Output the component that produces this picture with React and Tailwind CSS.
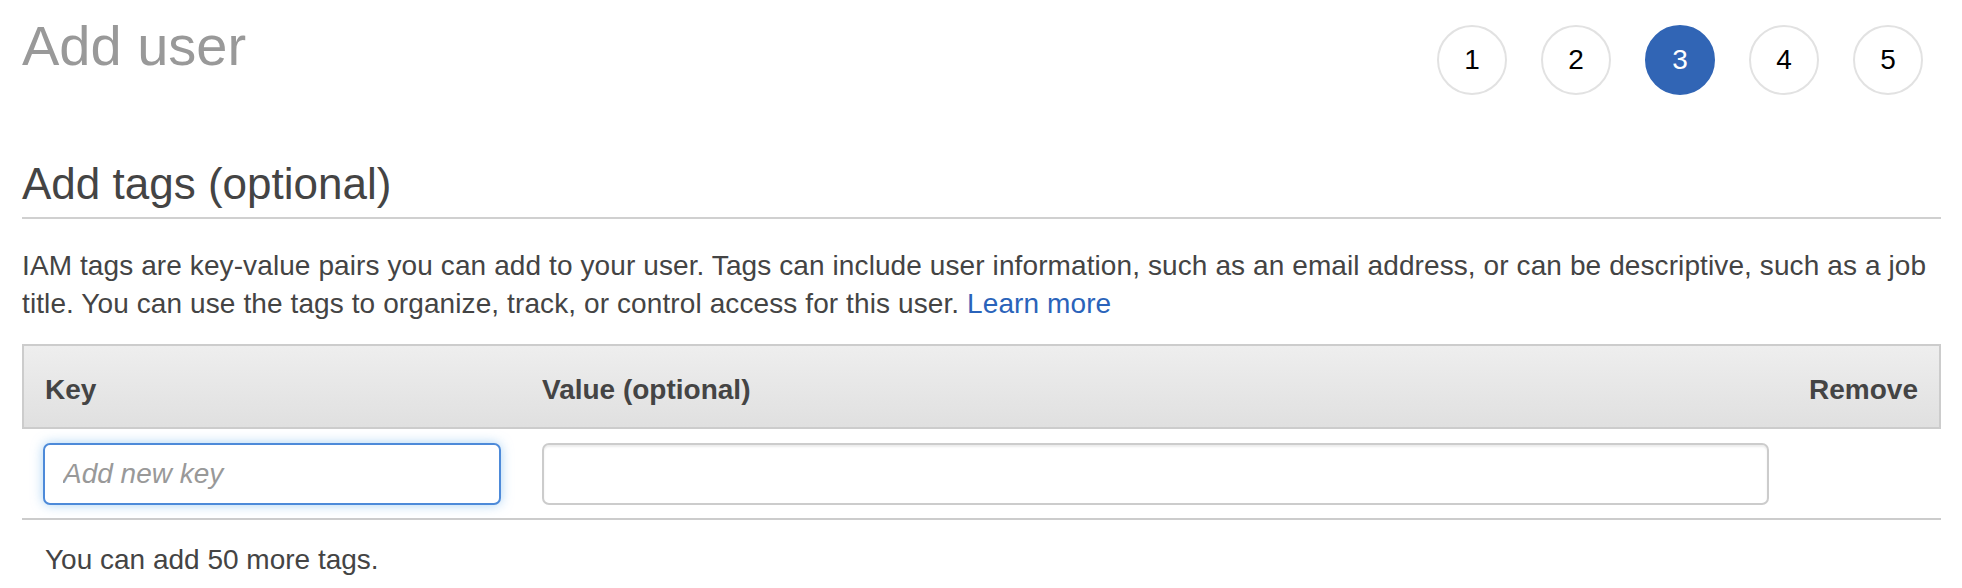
import React from "react";

const steps = [1, 2, 3, 4, 5];

export default function App() {
  return (
    <div
      className="min-h-screen w-full bg-white pl-[22px] pr-[21px] text-[#444]"
      style={{ fontFamily: "'Liberation Sans', Arial, sans-serif" }}
    >
      {/* Page header with wizard steps */}
      <div className="flex items-start justify-between">
        <h1 className="mt-[18px] text-[56px] font-normal leading-[56px] text-[#999]">Add user</h1>
        <div className="mr-[18px] mt-[25px] flex gap-[34px]">
          {steps.map((n) => (
            <div
              key={n}
              className={
                n === 3
                  ? "flex h-[70px] w-[70px] items-center justify-center rounded-full border-2 border-[#3165b5] bg-[#3165b5] text-[28px] text-white"
                  : "flex h-[70px] w-[70px] items-center justify-center rounded-full border-2 border-[#e2e2e2] bg-white text-[28px] text-black"
              }
            >
              {n}
            </div>
          ))}
        </div>
      </div>

      {/* Section title */}
      <h2 className="mt-[67px] border-b-2 border-[#d0d0d0] pb-[11px] text-[44px] font-normal leading-[44px] text-[#444]">
        Add tags (optional)
      </h2>

      <p className="mt-[28px] text-[28px] leading-[38px] tracking-[0.1px] text-[#444]">
        IAM tags are key-value pairs you can add to your user. Tags can include user information, such as an email
        address, or can be descriptive, such as a job title. You can use the tags to organize, track, or control access
        for this user. <span className="text-[#2a63ba]">Learn more</span>
      </p>

      {/* Tags table */}
      <div className="mt-[21px]">
        <div className="grid grid-cols-[518px_1227px_1fr] border-2 border-[#cccccc] bg-gradient-to-b from-[#eeeeee] to-[#e0e0e0] pb-[23px] pt-[30px] text-[28px] font-bold leading-[28px] text-[#444]">
          <div className="pl-[21px]">Key</div>
          <div>Value (optional)</div>
          <div className="pr-[21px] text-right">Remove</div>
        </div>

        <div className="grid grid-cols-[520px_1227px_1fr] border-b-2 border-[#cccccc] pb-[13px] pt-[14px]">
          <div className="pl-[21px]">
            <input
              type="text"
              placeholder="Add new key"
              className="h-[62px] w-[458px] rounded-[7px] border-2 border-[#4d8ad9] bg-white px-[18px] text-[28px] text-[#444] shadow-[0_0_12px_rgba(102,175,233,0.55)] outline-none placeholder:italic placeholder:text-[#999]"
            />
          </div>
          <div>
            <input
              type="text"
              className="h-[62px] w-full rounded-[7px] border-2 border-[#cccccc] bg-white px-[18px] text-[28px] text-[#444] shadow-[inset_0_2px_2px_rgba(0,0,0,0.075)] outline-none"
            />
          </div>
          <div />
        </div>
      </div>

      <p className="mt-[26px] pl-[23px] text-[28px] leading-[28px] text-[#444]">You can add 50 more tags.</p>
    </div>
  );
}
